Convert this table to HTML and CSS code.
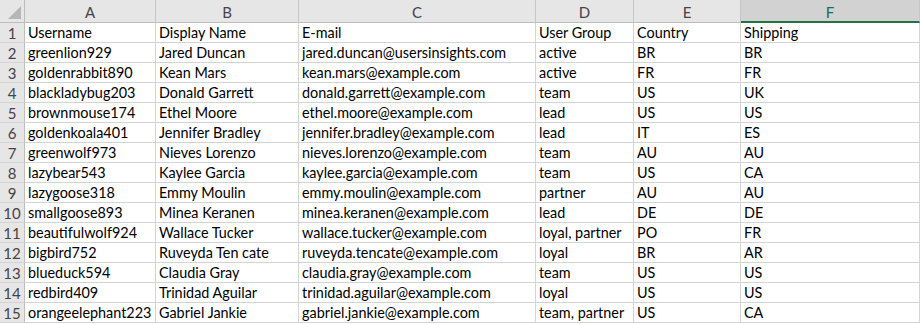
FILE: index.html
```html
<!DOCTYPE html>
<html>
<head>
<meta charset="utf-8">
<link rel="stylesheet" href="styles.css">
</head>
<body>
<div class="sheet">
  <div class="corner"><span class="tri"></span></div>
  <div class="colhdr">A</div>
  <div class="colhdr">B</div>
  <div class="colhdr">C</div>
  <div class="colhdr">D</div>
  <div class="colhdr">E</div>
  <div class="colhdr sel">F</div>

  <div class="rowhdr">1</div><div class="cell">Username</div><div class="cell">Display Name</div><div class="cell">E-mail</div><div class="cell">User Group</div><div class="cell">Country</div><div class="cell">Shipping</div>
  <div class="rowhdr">2</div><div class="cell">greenlion929</div><div class="cell">Jared Duncan</div><div class="cell">jared.duncan@usersinsights.com</div><div class="cell">active</div><div class="cell">BR</div><div class="cell">BR</div>
  <div class="rowhdr">3</div><div class="cell">goldenrabbit890</div><div class="cell">Kean Mars</div><div class="cell">kean.mars@example.com</div><div class="cell">active</div><div class="cell">FR</div><div class="cell">FR</div>
  <div class="rowhdr">4</div><div class="cell">blackladybug203</div><div class="cell">Donald Garrett</div><div class="cell">donald.garrett@example.com</div><div class="cell">team</div><div class="cell">US</div><div class="cell">UK</div>
  <div class="rowhdr">5</div><div class="cell">brownmouse174</div><div class="cell">Ethel Moore</div><div class="cell">ethel.moore@example.com</div><div class="cell">lead</div><div class="cell">US</div><div class="cell">US</div>
  <div class="rowhdr">6</div><div class="cell">goldenkoala401</div><div class="cell">Jennifer Bradley</div><div class="cell">jennifer.bradley@example.com</div><div class="cell">lead</div><div class="cell">IT</div><div class="cell">ES</div>
  <div class="rowhdr">7</div><div class="cell">greenwolf973</div><div class="cell">Nieves Lorenzo</div><div class="cell">nieves.lorenzo@example.com</div><div class="cell">team</div><div class="cell">AU</div><div class="cell">AU</div>
  <div class="rowhdr">8</div><div class="cell">lazybear543</div><div class="cell">Kaylee Garcia</div><div class="cell">kaylee.garcia@example.com</div><div class="cell">team</div><div class="cell">US</div><div class="cell">CA</div>
  <div class="rowhdr">9</div><div class="cell">lazygoose318</div><div class="cell">Emmy Moulin</div><div class="cell">emmy.moulin@example.com</div><div class="cell">partner</div><div class="cell">AU</div><div class="cell">AU</div>
  <div class="rowhdr">10</div><div class="cell">smallgoose893</div><div class="cell">Minea Keranen</div><div class="cell">minea.keranen@example.com</div><div class="cell">lead</div><div class="cell">DE</div><div class="cell">DE</div>
  <div class="rowhdr">11</div><div class="cell">beautifulwolf924</div><div class="cell">Wallace Tucker</div><div class="cell">wallace.tucker@example.com</div><div class="cell">loyal, partner</div><div class="cell">PO</div><div class="cell">FR</div>
  <div class="rowhdr">12</div><div class="cell">bigbird752</div><div class="cell">Ruveyda Ten cate</div><div class="cell">ruveyda.tencate@example.com</div><div class="cell">loyal</div><div class="cell">BR</div><div class="cell">AR</div>
  <div class="rowhdr">13</div><div class="cell">blueduck594</div><div class="cell">Claudia Gray</div><div class="cell">claudia.gray@example.com</div><div class="cell">team</div><div class="cell">US</div><div class="cell">US</div>
  <div class="rowhdr">14</div><div class="cell">redbird409</div><div class="cell">Trinidad Aguilar</div><div class="cell">trinidad.aguilar@example.com</div><div class="cell">loyal</div><div class="cell">US</div><div class="cell">US</div>
  <div class="rowhdr">15</div><div class="cell">orangeelephant223</div><div class="cell">Gabriel Jankie</div><div class="cell">gabriel.jankie@example.com</div><div class="cell">team, partner</div><div class="cell">US</div><div class="cell">CA</div>
</div>
</body>
</html>
```
FILE: styles.css
```css
html, body {
  margin: 0;
  padding: 0;
  background: #ffffff;
}
.sheet {
  display: grid;
  grid-template-columns: 25px 131px 143px 237px 98px 107px 1fr;
  grid-template-rows: 23px repeat(15, 20px);
  width: 920px;
  font-family: Lato, "Open Sans", sans-serif;
  font-size: 14.4px;
  color: #000;
}
.corner {
  background: #e6e6e6;
  border-right: 1px solid #bdbdbd;
  border-bottom: 1px solid #bdbdbd;
  box-sizing: border-box;
  position: relative;
}
.tri {
  position: absolute;
  right: 3px;
  bottom: 3px;
  width: 0;
  height: 0;
  border-left: 13px solid transparent;
  border-bottom: 13px solid #b6b6b6;
}
.colhdr {
  background: #e6e6e6;
  border-right: 1px solid #c6c6c6;
  border-bottom: 1px solid #bdbdbd;
  box-sizing: border-box;
  display: flex;
  align-items: center;
  justify-content: center;
  color: #444;
  font-size: 15px;
  padding-top: 1px;
}
.colhdr.sel {
  background: #d2d2d2;
  border-bottom: 2px solid #217346;
  color: #1f6b42;
  padding-top: 2px;
}
.rowhdr {
  background: #e6e6e6;
  border-right: 1px solid #bdbdbd;
  border-bottom: 1px solid #d4d4d4;
  box-sizing: border-box;
  display: flex;
  align-items: flex-end;
  justify-content: center;
  color: #444;
  font-size: 15px;
  line-height: 18px;
}
.cell {
  border-right: 1px solid #d4d4d4;
  border-bottom: 1px solid #d4d4d4;
  box-sizing: border-box;
  display: flex;
  align-items: flex-end;
  padding-left: 3px;
  white-space: nowrap;
  overflow: hidden;
  line-height: 18px;
}
```
